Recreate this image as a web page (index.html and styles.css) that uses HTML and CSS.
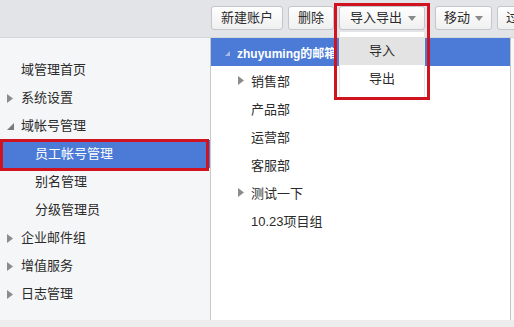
FILE: index.html
```html
<!DOCTYPE html>
<html lang="zh-CN">
<head>
<meta charset="utf-8">
<title>域管理</title>
<link rel="stylesheet" href="styles.css">
</head>
<body>
<div class="app">
  <div class="toolbar">
    <button class="btn">新建账户</button>
    <button class="btn">删除</button>
    <div class="dd">
      <button class="btn">导入导出<span class="caret"></span></button>
      <div class="menu">
        <div class="menu-item is-hover">导入</div>
        <div class="menu-item">导出</div>
      </div>
      <div class="mark"></div>
    </div>
    <button class="btn btn-caret">移动<span class="caret"></span></button>
    <button class="btn btn-caret">过滤<span class="caret"></span></button>
  </div>
  <div class="main">
    <nav class="side">
      <div class="row top"><span class="ico"></span>域管理首页</div>
      <div class="row top"><span class="ico"><svg width="6" height="9" viewBox="0 0 6 9"><path d="M0 0L6 4.5L0 9Z" fill="#8c8c8c"/></svg></span>系统设置</div>
      <div class="row top"><span class="ico"><svg width="7" height="7" viewBox="0 0 7 7"><path d="M7 0L7 7L0 7Z" fill="#7a7a7a"/></svg></span>域帐号管理</div>
      <div class="row sub selected">员工帐号管理</div>
      <div class="row sub">别名管理</div>
      <div class="row sub">分级管理员</div>
      <div class="row top"><span class="ico"><svg width="6" height="9" viewBox="0 0 6 9"><path d="M0 0L6 4.5L0 9Z" fill="#8c8c8c"/></svg></span>企业邮件组</div>
      <div class="row top"><span class="ico"><svg width="6" height="9" viewBox="0 0 6 9"><path d="M0 0L6 4.5L0 9Z" fill="#8c8c8c"/></svg></span>增值服务</div>
      <div class="row top"><span class="ico"><svg width="6" height="9" viewBox="0 0 6 9"><path d="M0 0L6 4.5L0 9Z" fill="#8c8c8c"/></svg></span>日志管理</div>
    </nav>
    <section class="tree">
      <div class="node root"><span class="tico"><svg width="5" height="5" viewBox="0 0 5 5"><path d="M5 0L5 5L0 5Z" fill="#a8bbe2"/></svg></span><span class="root-name">zhuyuming的邮箱</span></div>
      <div class="node child"><span class="tico"><svg width="6" height="9" viewBox="0 0 6 9"><path d="M0 0L6 4.5L0 9Z" fill="#8c8c8c"/></svg></span>销售部</div>
      <div class="node child"><span class="tico"></span>产品部</div>
      <div class="node child"><span class="tico"></span>运营部</div>
      <div class="node child"><span class="tico"></span>客服部</div>
      <div class="node child"><span class="tico"><svg width="6" height="9" viewBox="0 0 6 9"><path d="M0 0L6 4.5L0 9Z" fill="#8c8c8c"/></svg></span>测试一下</div>
      <div class="node child"><span class="tico"></span>10.23项目组</div>
    </section>
    <div class="rest"></div>
  </div>
  <div class="foot"></div>
</div>
</body>
</html>
```
FILE: styles.css
```css
* { box-sizing: border-box; }
html, body { margin: 0; padding: 0; }
body {
  width: 514px;
  height: 327px;
  overflow: hidden;
  font-family: "Liberation Sans", "Noto Sans CJK SC", sans-serif;
  font-size: 13px;
  color: #2b2b2b;
  background: #ededed;
}
.app {
  display: flex;
  flex-direction: column;
  height: 327px;
  overflow: hidden;
}
.toolbar {
  position: relative;
  z-index: 5;
  height: 38px;
  flex: none;
  display: flex;
  align-items: flex-start;
  gap: 5px;
  padding: 6px 0 0 211px;
  background: #e2e4e8;
  border-bottom: 1px solid #d3d6db;
  white-space: nowrap;
}
.btn {
  flex: none;
  height: 24px;
  padding: 0 9px;
  font: inherit;
  color: #2b2b2b;
  background: linear-gradient(#fefefe, #f0f0f0);
  border: 1px solid #c4c6ca;
  border-radius: 3px;
  display: flex;
  align-items: center;
  line-height: 22px;
}
.btn-caret { padding: 0 8px; }
.caret {
  display: inline-block;
  margin-left: 5px;
  width: 0;
  height: 0;
  border-left: 4px solid transparent;
  border-right: 4px solid transparent;
  border-top: 5px solid #8a8a8a;
}
.dd {
  position: relative;
  flex: none;
  margin-right: 5px;
}
.dd .btn {
  width: 86px;
  padding: 0 10px;
}
.dd .caret { margin-left: 6px; }
.menu {
  position: absolute;
  top: 26px;
  left: 0;
  width: 86px;
  padding: 5px 0 4px;
  background: #fff;
  border: 1px solid #e6e6e6;
  border-top: none;
}
.menu-item {
  height: 28px;
  line-height: 28px;
  text-align: center;
}
.menu-item.is-hover { background: #e3e3e3; }
.mark {
  position: absolute;
  left: -5px;
  right: -5px;
  top: -3px;
  height: 97px;
  border: 3px solid #d0141f;
  pointer-events: none;
}
.main {
  flex: none;
  height: 282px;
  display: flex;
}
.side {
  width: 211px;
  flex: none;
  padding-top: 18px;
  background: #f5f6f8;
  border-right: 1px solid #c8c8c8;
}
.row {
  position: relative;
  height: 28px;
  line-height: 28px;
  display: flex;
  align-items: center;
  white-space: nowrap;
}
.row.top { padding-left: 7px; }
.row .ico {
  width: 14px;
  flex: none;
  display: flex;
  align-items: center;
}
.row.sub { padding-left: 35px; }
.row.selected {
  background: #4b7bd7;
  color: #fff;
}
.row.selected::after {
  content: "";
  position: absolute;
  left: 0;
  right: 1px;
  top: -1px;
  bottom: -3px;
  border: 3px solid #cf1420;
}
.tree {
  width: 300px;
  flex: none;
  background: #fff;
  border-right: 1px solid #c6c6c6;
}
.node {
  height: 28px;
  display: flex;
  align-items: center;
  white-space: nowrap;
  overflow: hidden;
}
.node.root {
  background: #4b7bd7;
  color: #fff;
  padding-left: 14px;
}
.node.root .tico { width: 12px; flex: none; display: flex; align-items: center; padding-top: 3px; }
.root-name {
  font-weight: bold;
  font-size: 12px;
}
.node.child { padding-left: 27px; }
.node.child .tico { width: 13px; flex: none; display: flex; align-items: center; }
.rest {
  flex: 1;
  background: #f7f8fa;
}
.foot {
  flex: 1;
  background: #ededed;
}
```
